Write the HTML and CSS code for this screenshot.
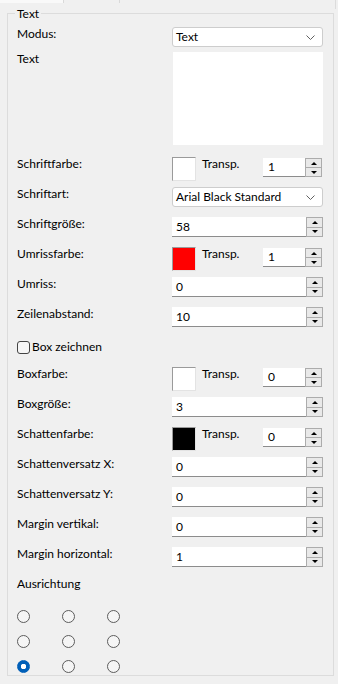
FILE: index.html
```html
<!DOCTYPE html>
<html>

<head>
  <title>Text</title>
  <link rel="stylesheet" href="styles.css">
</head>

<body>
  <div class="tabs">
    <div class="tab active"></div>
    <div class="tab"></div>
    <div class="tab-edge"></div>
  </div>

  <fieldset class="group">
    <legend>Text</legend>

    <div class="row row-mode">
      <label>Modus:</label>
      <div class="combo">
        <span>Text</span>
        <svg class="chevron" width="9" height="5" viewBox="0 0 9 5"><polyline points="0.5,0.5 4.5,4.5 8.5,0.5" fill="none" stroke="#606060" stroke-width="1"/></svg>
      </div>
    </div>

    <div class="row row-text">
      <label>Text</label>
      <div class="textarea"></div>
    </div>

    <div class="row">
      <label>Schriftfarbe:</label>
      <div class="color-ctl">
        <div class="swatch" style="background: #ffffff"></div>
        <span class="transp">Transp.</span>
        <div class="spin small">
          <div class="spin-value">1</div>
          <div class="spin-btns"><div class="up"></div><div class="down"></div></div>
        </div>
      </div>
    </div>

    <div class="row">
      <label>Schriftart:</label>
      <div class="combo">
        <span>Arial Black Standard</span>
        <svg class="chevron" width="9" height="5" viewBox="0 0 9 5"><polyline points="0.5,0.5 4.5,4.5 8.5,0.5" fill="none" stroke="#606060" stroke-width="1"/></svg>
      </div>
    </div>

    <div class="row">
      <label>Schriftgröße:</label>
      <div class="spin">
        <div class="spin-value">58</div>
        <div class="spin-btns"><div class="up"></div><div class="down"></div></div>
      </div>
    </div>

    <div class="row">
      <label>Umrissfarbe:</label>
      <div class="color-ctl">
        <div class="swatch" style="background: #ff0000"></div>
        <span class="transp">Transp.</span>
        <div class="spin small">
          <div class="spin-value">1</div>
          <div class="spin-btns"><div class="up"></div><div class="down"></div></div>
        </div>
      </div>
    </div>

    <div class="row">
      <label>Umriss:</label>
      <div class="spin">
        <div class="spin-value">0</div>
        <div class="spin-btns"><div class="up"></div><div class="down"></div></div>
      </div>
    </div>

    <div class="row">
      <label>Zeilenabstand:</label>
      <div class="spin">
        <div class="spin-value">10</div>
        <div class="spin-btns"><div class="up"></div><div class="down"></div></div>
      </div>
    </div>

    <div class="row row-check">
      <span class="checkbox"></span>
      <span class="check-label">Box zeichnen</span>
    </div>

    <div class="row">
      <label>Boxfarbe:</label>
      <div class="color-ctl">
        <div class="swatch" style="background: #ffffff"></div>
        <span class="transp">Transp.</span>
        <div class="spin small">
          <div class="spin-value">0</div>
          <div class="spin-btns"><div class="up"></div><div class="down"></div></div>
        </div>
      </div>
    </div>

    <div class="row">
      <label>Boxgröße:</label>
      <div class="spin">
        <div class="spin-value">3</div>
        <div class="spin-btns"><div class="up"></div><div class="down"></div></div>
      </div>
    </div>

    <div class="row">
      <label>Schattenfarbe:</label>
      <div class="color-ctl">
        <div class="swatch" style="background: #000000"></div>
        <span class="transp">Transp.</span>
        <div class="spin small">
          <div class="spin-value">0</div>
          <div class="spin-btns"><div class="up"></div><div class="down"></div></div>
        </div>
      </div>
    </div>

    <div class="row">
      <label>Schattenversatz X:</label>
      <div class="spin">
        <div class="spin-value">0</div>
        <div class="spin-btns"><div class="up"></div><div class="down"></div></div>
      </div>
    </div>

    <div class="row">
      <label>Schattenversatz Y:</label>
      <div class="spin">
        <div class="spin-value">0</div>
        <div class="spin-btns"><div class="up"></div><div class="down"></div></div>
      </div>
    </div>

    <div class="row">
      <label>Margin vertikal:</label>
      <div class="spin">
        <div class="spin-value">0</div>
        <div class="spin-btns"><div class="up"></div><div class="down"></div></div>
      </div>
    </div>

    <div class="row">
      <label>Margin horizontal:</label>
      <div class="spin">
        <div class="spin-value">1</div>
        <div class="spin-btns"><div class="up"></div><div class="down"></div></div>
      </div>
    </div>

    <div class="row">
      <label>Ausrichtung</label>
    </div>

    <div class="align-grid">
      <span class="radio"></span>
      <span class="radio"></span>
      <span class="radio"></span>
      <span class="radio"></span>
      <span class="radio"></span>
      <span class="radio"></span>
      <span class="radio checked"></span>
      <span class="radio"></span>
      <span class="radio"></span>
    </div>
  </fieldset>
</body>

</html>
```

FILE: styles.css
```css
body {
  margin: 0;
  width: 338px;
  height: 684px;
  overflow: hidden;
  background: #f0f0f0;
  font-family: Lato, "Noto Sans", sans-serif;
  font-size: 12px;
  color: #000;
}

/* Tab headers, only their bottom edge is visible */
.tabs {
  display: flex;
  height: 3px;
}

.tab {
  width: 63px;
  border-right: 1px solid #d9d9d9;
}

.tab.active {
  background: #f9f9f9;
}

.tab + .tab {
  width: 55px;
}

.tab-edge {
  width: 1px;
  height: 9px;
  margin-left: auto;
  margin-right: 2px;
  background: #dcdcdc;
}

/* Group box */
.group {
  box-sizing: border-box;
  width: 327px;
  height: 671px;
  margin: 2px 0 0 7px;
  padding: 6px 10px 0 9px;
  border: 1px solid #dcdcdc;
  min-width: 0;
}

.group legend {
  padding: 2px 2px 0;
  margin-left: -2px;
  line-height: 14px;
}

.row {
  display: grid;
  grid-template-columns: 155px 151px;
  align-items: start;
  height: 30px;
}

.row label {
  line-height: 14px;
}

.row-mode {
  height: 25px;
}

.row-text {
  height: 105px;
}

/* Combo box */
.combo {
  box-sizing: border-box;
  display: flex;
  align-items: center;
  justify-content: space-between;
  height: 20px;
  padding: 0 7px 0 3px;
  background: #fff;
  border: 1px solid #cdcdcd;
  border-radius: 3px;
  line-height: 18px;
}

.chevron {
  display: block;
}

.textarea {
  height: 93px;
  margin-left: 1px;
  background: #fff;
}

/* Colour swatch + transparency */
.color-ctl {
  display: flex;
  align-items: flex-start;
}

.swatch {
  box-sizing: border-box;
  width: 24px;
  height: 24px;
  border: 1px solid;
  border-color: #9a9a9a #e3e3e3 #e3e3e3 #9a9a9a;
}

.transp {
  margin-left: 6px;
  line-height: 14px;
}

/* Numeric up/down */
.spin {
  display: flex;
  height: 20px;
}

.spin.small {
  width: 59px;
  height: 19px;
  margin: 1px 1px 0 auto;
}

.spin-value {
  flex: 1;
  padding-left: 4px;
  background: #fff;
  border-bottom: 1px solid #8c8c8c;
  line-height: 19px;
}

.spin.small .spin-value {
  padding-left: 5px;
  line-height: 18px;
}

.spin-btns {
  box-sizing: border-box;
  display: flex;
  flex-direction: column;
  width: 17px;
  border: 1px solid #acacac;
  background: #e9e9e9;
}

.spin-btns .up,
.spin-btns .down {
  flex: 1;
  display: flex;
  align-items: center;
  justify-content: center;
}

.spin-btns .up {
  border-bottom: 1px solid #acacac;
}

.spin-btns .up::before {
  content: "";
  border-left: 3px solid transparent;
  border-right: 3px solid transparent;
  border-bottom: 3px solid #000;
}

.spin-btns .down::before {
  content: "";
  border-left: 3px solid transparent;
  border-right: 3px solid transparent;
  border-top: 3px solid #000;
}

/* Checkbox */
.row-check {
  display: flex;
  align-items: center;
  height: 20px;
  padding-bottom: 10px;
}

.checkbox {
  box-sizing: border-box;
  width: 13px;
  height: 13px;
  border: 1px solid #444;
  border-radius: 3px;
  background: #f6f6f6;
}

.check-label {
  margin-left: 2px;
  line-height: 14px;
}

/* Alignment radios */
.align-grid {
  display: grid;
  grid-template-columns: repeat(3, 45px);
  grid-auto-rows: 25px;
  padding-top: 3px;
}

.radio {
  box-sizing: border-box;
  width: 13px;
  height: 13px;
  border: 1px solid #5c5c5c;
  border-radius: 50%;
  background: #f5f5f5;
}

.radio.checked {
  border-color: #005fb8;
  background: radial-gradient(circle, #fff 0 2.5px, #005fb8 3px);
}
```
